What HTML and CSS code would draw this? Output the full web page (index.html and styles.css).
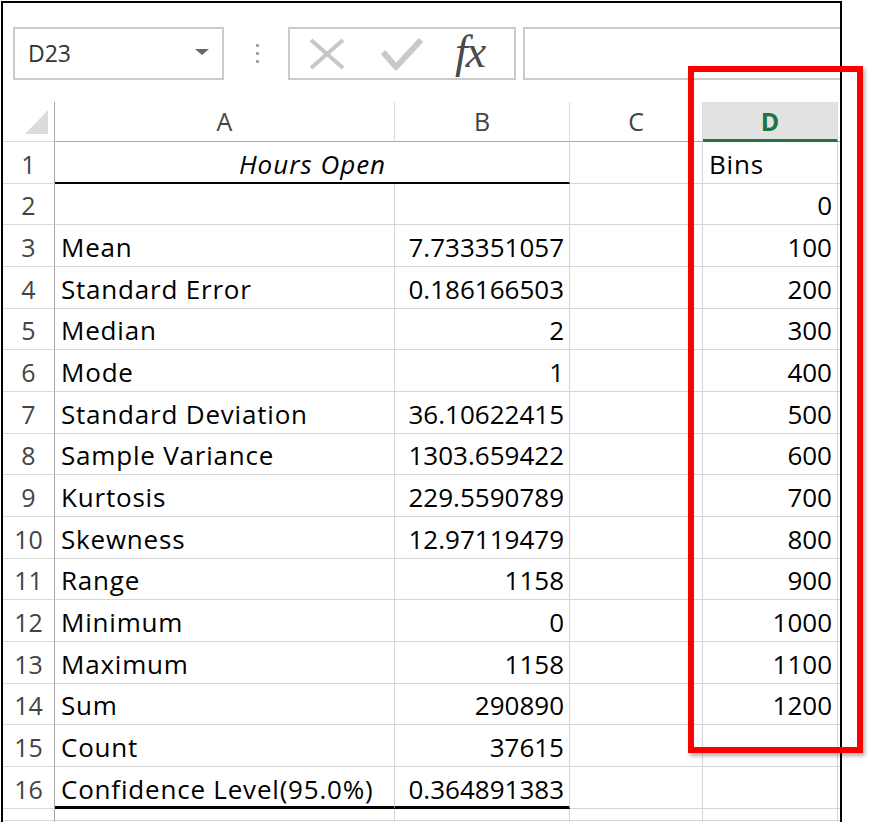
FILE: index.html
```html
<!DOCTYPE html>
<html>
<head>
<meta charset="utf-8">
<link rel="stylesheet" href="styles.css">
</head>
<body>
<div class="frame">
  <div class="fbar">
    <div class="namebox"><span class="ref">D23</span><span class="caret"></span></div>
    <div class="dots"><i></i><i></i><i></i></div>
    <div class="fnbox">
      <svg class="ic-x" width="36" height="32" viewBox="0 0 36 32"><path d="M2 2 L34 30 M34 2 L2 30" stroke="#c7c7c7" stroke-width="4" fill="none"/></svg>
      <svg class="ic-ok" width="42" height="36" viewBox="0 0 42 36"><path d="M2 16 L15 31 L40 4" stroke="#c9c9c9" stroke-width="6" fill="none" stroke-linejoin="round"/></svg>
      <span class="fx">fx</span>
    </div>
    <div class="input"></div>
  </div>
  <div class="sheet">
    <div class="corner"><svg width="23" height="24" viewBox="0 0 23 24"><path d="M23 0 L23 24 L0 24 Z" fill="#dcdcdc"/></svg></div>
    <div class="ch">A</div><div class="ch">B</div><div class="ch">C</div><div class="ch sel">D</div><div class="ch last"></div>

    <div class="rh">1</div><div class="c t merged title">Hours Open</div><div class="c"></div><div class="c t">Bins</div><div class="c last"></div>
    <div class="rh">2</div><div class="c"></div><div class="c"></div><div class="c"></div><div class="c n">0</div><div class="c last"></div>
    <div class="rh">3</div><div class="c t">Mean</div><div class="c n">7.733351057</div><div class="c"></div><div class="c n">100</div><div class="c last"></div>
    <div class="rh">4</div><div class="c t">Standard Error</div><div class="c n">0.186166503</div><div class="c"></div><div class="c n">200</div><div class="c last"></div>
    <div class="rh">5</div><div class="c t">Median</div><div class="c n">2</div><div class="c"></div><div class="c n">300</div><div class="c last"></div>
    <div class="rh">6</div><div class="c t">Mode</div><div class="c n">1</div><div class="c"></div><div class="c n">400</div><div class="c last"></div>
    <div class="rh">7</div><div class="c t">Standard Deviation</div><div class="c n">36.10622415</div><div class="c"></div><div class="c n">500</div><div class="c last"></div>
    <div class="rh">8</div><div class="c t">Sample Variance</div><div class="c n">1303.659422</div><div class="c"></div><div class="c n">600</div><div class="c last"></div>
    <div class="rh">9</div><div class="c t">Kurtosis</div><div class="c n">229.5590789</div><div class="c"></div><div class="c n">700</div><div class="c last"></div>
    <div class="rh">10</div><div class="c t">Skewness</div><div class="c n">12.97119479</div><div class="c"></div><div class="c n">800</div><div class="c last"></div>
    <div class="rh">11</div><div class="c t">Range</div><div class="c n">1158</div><div class="c"></div><div class="c n">900</div><div class="c last"></div>
    <div class="rh">12</div><div class="c t">Minimum</div><div class="c n">0</div><div class="c"></div><div class="c n">1000</div><div class="c last"></div>
    <div class="rh">13</div><div class="c t">Maximum</div><div class="c n">1158</div><div class="c"></div><div class="c n">1100</div><div class="c last"></div>
    <div class="rh">14</div><div class="c t">Sum</div><div class="c n">290890</div><div class="c"></div><div class="c n">1200</div><div class="c last"></div>
    <div class="rh">15</div><div class="c t">Count</div><div class="c n">37615</div><div class="c"></div><div class="c"></div><div class="c last"></div>
    <div class="rh">16</div><div class="c t btm">Confidence Level(95.0%)</div><div class="c n btm">0.364891383</div><div class="c"></div><div class="c"></div><div class="c last"></div>
    <div class="rh"></div><div class="c"></div><div class="c"></div><div class="c"></div><div class="c"></div><div class="c last"></div>
    <div class="rh"></div><div class="c"></div><div class="c"></div><div class="c"></div><div class="c"></div><div class="c last"></div>
  </div>
</div>
<div class="callout"></div>
</body>
</html>
```
FILE: styles.css
```css
html, body {
  margin: 0;
  padding: 0;
  background: #fff;
  overflow: hidden;
}
body {
  width: 870px;
  height: 822px;
  position: relative;
  font-family: "Open Sans", "Liberation Sans", sans-serif;
}
.frame {
  margin: 1px 0 0 1px;
  width: 837px;
  height: 860px;
  border: 2px solid #000;
  border-bottom: none;
  overflow: hidden;
}
.fbar {
  height: 75px;
  padding: 24px 0 0 10px;
  display: flex;
  align-items: flex-start;
}
.namebox {
  box-sizing: border-box;
  width: 211px;
  height: 53px;
  border: 2px solid #cbcbcb;
  display: flex;
  align-items: center;
  justify-content: space-between;
  padding: 0 13px 0 13px;
}
.ref {
  font-size: 23px;
  color: #333;
  line-height: 1;
}
.caret {
  width: 0;
  height: 0;
  border-left: 7px solid transparent;
  border-right: 7px solid transparent;
  border-top: 6px solid #666;
  margin-top: -3px;
}
.dots {
  width: 3px;
  margin-left: 32px;
  height: 53px;
  display: flex;
  flex-direction: column;
  justify-content: center;
  gap: 5px;
}
.dots i {
  display: block;
  width: 3px;
  height: 3px;
  background: #a5a5a5;
}
.fnbox {
  box-sizing: border-box;
  margin-left: 29px;
  width: 228px;
  height: 53px;
  border: 2px solid #cbcbcb;
  display: flex;
  align-items: center;
  padding-left: 19px;
}
.ic-x { margin-top: 1px; }
.ic-ok { margin-left: 36px; margin-top: 1px; }
.fx {
  margin-left: 32px;
  font-family: "Liberation Serif", serif;
  font-style: italic;
  font-size: 46px;
  line-height: 1;
  color: #4a4a4a;
  letter-spacing: -2px;
  margin-top: -4px;
}
.input {
  box-sizing: border-box;
  margin-left: 7px;
  flex: 1;
  height: 53px;
  border: 2px solid #cbcbcb;
  border-right: none;
}
.sheet {
  display: grid;
  grid-template-columns: 52px 340px 175px 133px 135px 1fr;
  grid-template-rows: 40px repeat(5, 42px 41px 42px) 42px 12px 42px;
  font-size: 26px;
  color: #000;
}
.sheet > div {
  box-sizing: border-box;
  border-right: 1px solid #d6d6d6;
  border-bottom: 1px solid #d6d6d6;
  display: flex;
  align-items: flex-end;
  line-height: 26px;
  padding-bottom: 6px;
  white-space: nowrap;
}
.sheet > .corner {
  border-right: 1px solid #a8a8a8;
  border-bottom: 1px solid #dadada;
  padding: 0 0 7px 22px;
}
.corner svg { display: block; }
.sheet > .ch {
  justify-content: center;
  border-bottom: 1px solid #a8a8a8;
  border-right: 1px solid #dadada;
  color: #444;
  font-size: 25px;
  padding-bottom: 7px;
}
.sheet > .ch.sel {
  background: #e2e2e2;
  border-bottom: 3px solid #217346;
  color: #217346;
  font-weight: 700;
  padding-bottom: 5px;
}
.sheet > .rh {
  justify-content: center;
  color: #444;
  font-size: 25px;
  border-right: 1px solid #a8a8a8;
  border-bottom: 1px solid #dadada;
}
.sheet > .c {
  padding-left: 6px;
  padding-right: 5px;
}
.sheet > .t {
  letter-spacing: 0.8px;
}
.sheet > .n {
  justify-content: flex-end;
}
.sheet > .last {
  border-right: none;
}
.sheet > .merged {
  grid-column: span 2;
  justify-content: center;
  border-bottom: 2px solid #000;
  padding-bottom: 5px;
}
.sheet > .title {
  font-style: italic;
  letter-spacing: 1px;
}
.sheet > .btm {
  border-bottom: 3px solid #000;
  padding-bottom: 4px;
}
.callout {
  position: absolute;
  left: 688px;
  top: 66px;
  width: 175px;
  height: 687px;
  box-sizing: border-box;
  border: 6px solid #ff0000;
  box-shadow: 2px 3px 4px rgba(0, 0, 0, 0.3);
}
```
